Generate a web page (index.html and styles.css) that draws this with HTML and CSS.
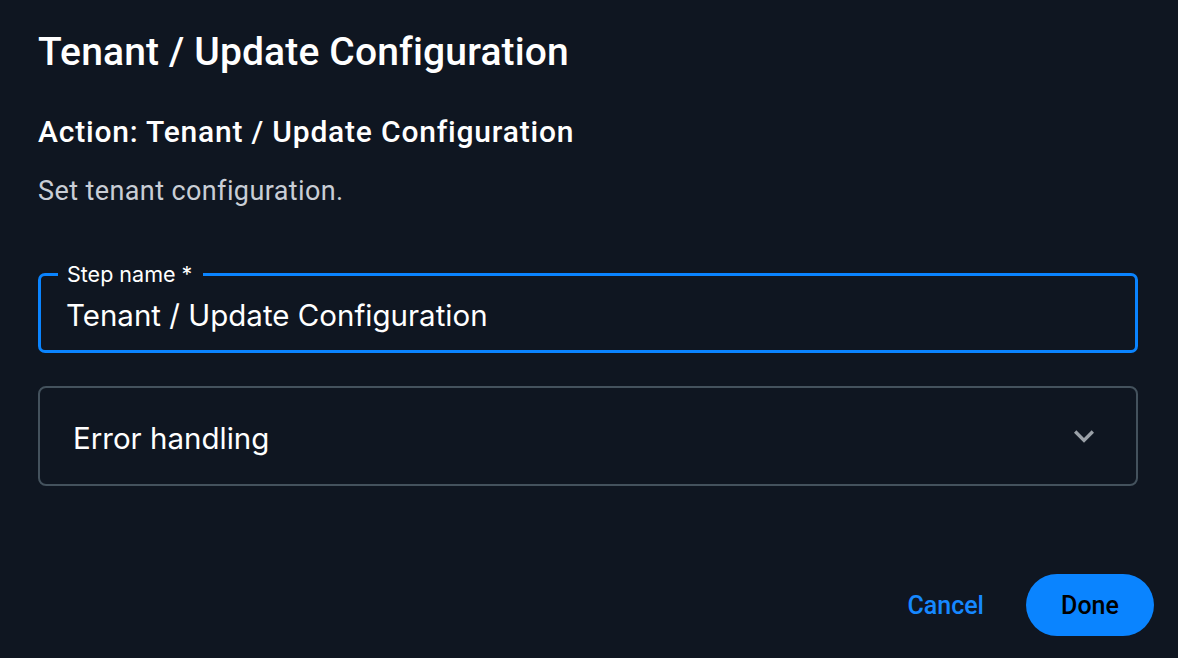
FILE: index.html
```html
<!DOCTYPE html>
<html lang="en">
<head>
<meta charset="utf-8">
<title>Tenant / Update Configuration</title>
<link rel="stylesheet" href="styles.css">
</head>
<body>
<div class="dialog">
  <div class="content">
    <h1 class="title">Tenant / Update Configuration</h1>
    <h2 class="subtitle">Action: Tenant / Update Configuration</h2>
    <p class="desc">Set tenant configuration.</p>
    <div class="field">
      <span class="field-label">Step name *</span>
      <div class="field-value">Tenant / Update Configuration</div>
    </div>
    <div class="accordion">
      <span class="accordion-title">Error handling</span>
      <svg class="chevron" width="40" height="40" viewBox="0 0 24 24" aria-hidden="true"><path d="M16.59 8.59L12 13.17 7.41 8.59 6 10l6 6 6-6z" fill="currentColor"/></svg>
    </div>
  </div>
  <div class="footer">
    <button class="btn btn-text">Cancel</button>
    <button class="btn btn-primary">Done</button>
  </div>
</div>
</body>
</html>
```
FILE: styles.css
```css
html, body {
  margin: 0;
  padding: 0;
  background: #0f1621;
  width: 1178px;
  height: 658px;
  overflow: hidden;
}
.dialog {
  font-family: Roboto, "Liberation Sans", sans-serif;
  color: #ffffff;
}
.content {
  padding: 29px 40px 0 38px;
}
.title {
  margin: 0;
  font-size: 39px;
  line-height: 46px;
  font-weight: 500;
  letter-spacing: 0.15px;
}
.subtitle {
  margin: 39px 0 0;
  font-size: 30px;
  line-height: 36px;
  font-weight: 500;
  letter-spacing: 0.8px;
}
.desc {
  margin: 24px 0 0;
  font-size: 27px;
  line-height: 34px;
  font-weight: 400;
  letter-spacing: 0.4px;
  color: #c9ced6;
}
.field {
  position: relative;
  margin-top: 65px;
  height: 80px;
  box-sizing: border-box;
  border: 3px solid #0a84ff;
  border-radius: 7px;
  padding: 21px 0 0 25px;
}
.field-label {
  position: absolute;
  top: -12px;
  left: 17px;
  padding: 0 11px 0 9px;
  background: #0f1621;
  font-family: Inter, "Noto Sans", sans-serif;
  font-size: 21.5px;
  line-height: 21px;
  color: #ffffff;
}
.field-value {
  font-family: Inter, "Noto Sans", sans-serif;
  font-size: 29.5px;
  line-height: 36px;
  color: #ffffff;
}
.accordion {
  margin-top: 33px;
  height: 100px;
  box-sizing: border-box;
  border: 2px solid #44525d;
  border-radius: 8px;
  padding: 0 32px 0 33px;
  display: flex;
  align-items: center;
  justify-content: space-between;
}
.accordion-title {
  font-family: Inter, "Noto Sans", sans-serif;
  font-size: 29.5px;
  line-height: 36px;
  padding-top: 4px;
  color: #ffffff;
}
.chevron {
  color: #9ba1a8;
  display: block;
}
.footer {
  display: flex;
  justify-content: flex-end;
  align-items: center;
  gap: 26px;
  padding: 88px 24px 0 0;
}
.btn {
  font-family: Roboto, "Liberation Sans", sans-serif;
  font-size: 25px;
  font-weight: 500;
  border: none;
  cursor: pointer;
}
.btn-text {
  background: transparent;
  color: #1688ff;
  padding: 0 16px;
  height: 62px;
}
.btn-primary {
  background: #0a84ff;
  color: #000000;
  height: 62px;
  width: 128px;
  border-radius: 31px;
  padding: 0;
}
```
